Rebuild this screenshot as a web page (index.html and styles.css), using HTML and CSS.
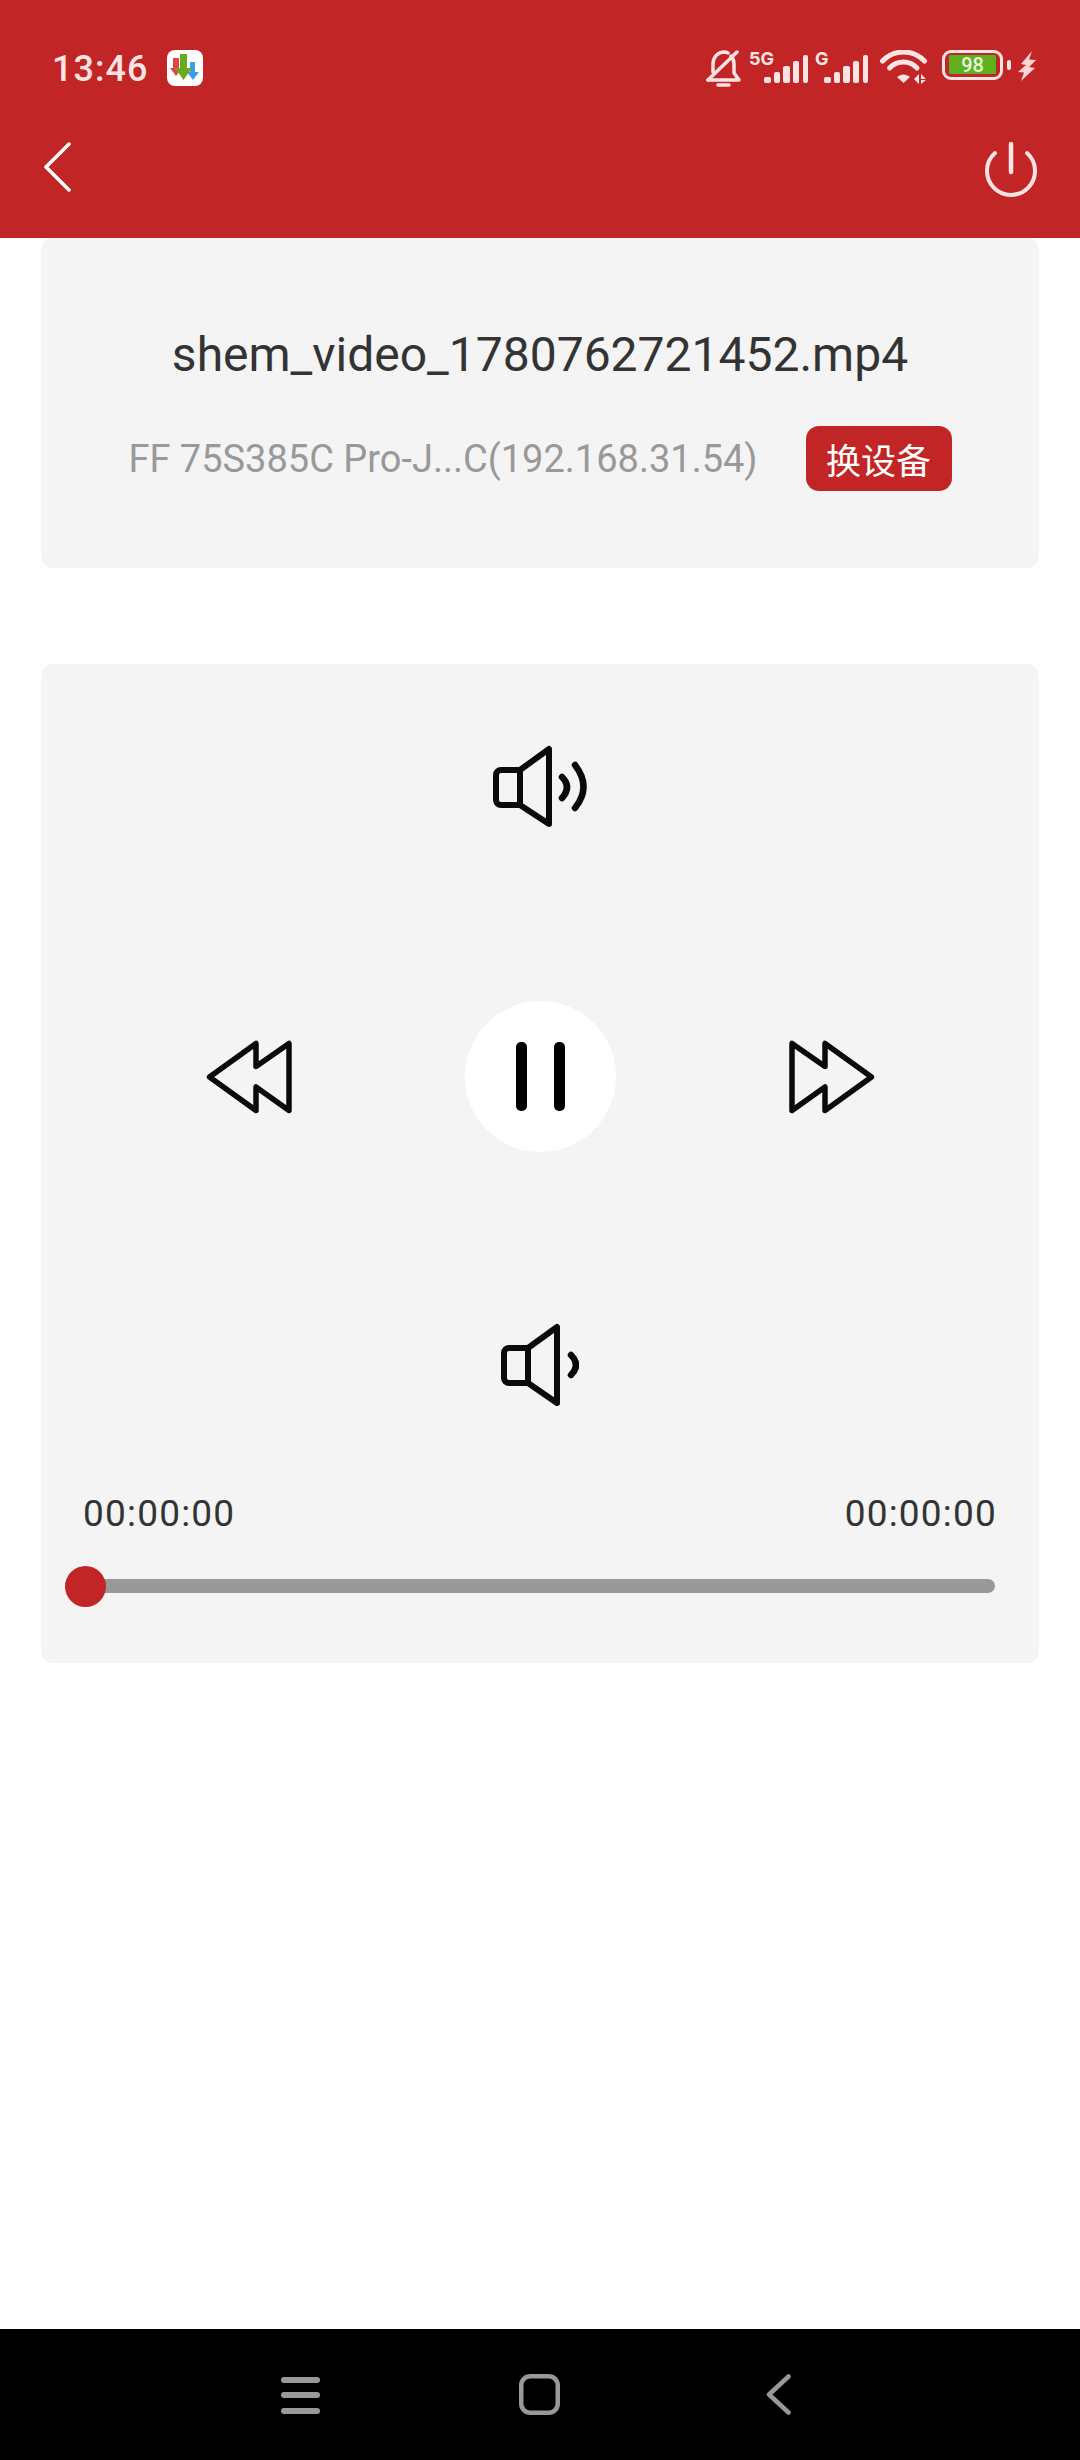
FILE: index.html
```html
<!DOCTYPE html>
<html lang="en">
<head>
  <meta charset="UTF-8" />
  <meta name="viewport" content="width=device-width, initial-scale=1.0" />
  <title>Cast Remote</title>
  <link rel="stylesheet" href="styles.css">
</head>
<body>
  <header class="top">
    <div class="status">
      <div class="status-left">
        <span class="clock">13:46</span>
        <svg class="app-icon" width="36" height="36" viewBox="0 0 36 36">
          <rect width="36" height="36" rx="8" fill="#fff" />
          <path d="M6 8h6v10h3l-6 8-6-8h3z" fill="#e04646" />
          <path d="M23 12h5v10h4l-6 8-6-8h3z" fill="#3d9fea" />
          <path d="M13 4h7v14h5l-8.500 12L8 18h5z" fill="#6aab1e" />
        </svg>
      </div>
      <div class="status-right">
        <svg width="35" height="37" viewBox="0 0 35 37" fill="none" stroke="#fde4e4" stroke-width="3.500" stroke-linecap="round" stroke-linejoin="round">
          <path d="M2 30h31l-5-7v-9c0-4-1-6-3-8M7 22v-8C7 7 12 2 18 2c2 0 3 .5 4 1" />
          <path d="M2 30L31 2" />
          <path d="M12 35h11" />
        </svg>
        <svg class="net" width="59" height="36" viewBox="0 -5 59 36" fill="#fde4e4">
          <text class="net-label" x="0" y="13">5G</text>
          <rect x="15" y="25" width="7" height="6" rx="2" />
          <rect x="25" y="20" width="6" height="11" rx="2" />
          <rect x="34" y="14" width="7" height="17" rx="2" />
          <rect x="44" y="9" width="6" height="22" rx="2" />
          <rect x="54" y="3" width="5" height="28" rx="2" />
        </svg>
        <svg class="net" width="53" height="36" viewBox="0 -5 53 36" fill="#fde4e4">
          <text class="net-label" x="0" y="13">G</text>
          <rect x="9" y="25" width="7" height="6" rx="2" />
          <rect x="19" y="20" width="6" height="11" rx="2" />
          <rect x="28" y="14" width="7" height="17" rx="2" />
          <rect x="38" y="9" width="6" height="22" rx="2" />
          <rect x="48" y="3" width="5" height="28" rx="2" />
        </svg>
        <svg width="48" height="34" viewBox="0 0 48 34" fill="none" stroke="#fde4e4" stroke-width="5" stroke-linecap="round">
          <path d="M2.500 11C14 -1 33 -1 44.500 11" />
          <path d="M9.500 18C17 10 30 10 37 18" />
          <path d="M17 27C21 23.500 26 23.500 30 27L23.500 33z" fill="#fde4e4" stroke="none" />
          <path d="M34 29l5-5v10zM41 24l5 5h-5zM41 34v-4h5z" fill="#fde4e4" stroke="none" />
        </svg>
        <div class="battery">
          <div class="battery-body"><span class="battery-level">98</span></div>
          <span class="battery-nub"></span>
        </div>
        <svg class="bolt" width="18" height="30" viewBox="0 0 18 30" fill="#fbd5d5">
          <path d="M14 0L3 13l5 1-8 7 6 .500L3 30l14-13-6-1 7-7-7-.500z" />
        </svg>
      </div>
    </div>
    <div class="toolbar">
      <svg width="28" height="50" viewBox="0 0 28 50" fill="none" stroke="#fff" stroke-width="3.500" stroke-linecap="round" stroke-linejoin="round">
        <path d="M25 2L2 25l23 23" />
      </svg>
      <svg width="52" height="56" viewBox="0 0 52 56" fill="none" stroke="#fde4e4" stroke-width="4" stroke-linecap="round">
        <path d="M10 11A24 24 0 1 0 42 11" />
        <path d="M26 2v28" stroke-width="4.500" />
      </svg>
    </div>
  </header>

  <main class="content">
    <section class="card info">
      <div class="file-name">shem_video_1780762721452.mp4</div>
      <div class="device-row">
        <span class="device-name">FF 75S385C Pro-J...C(192.168.31.54)</span>
        <button class="switch-btn" type="button">换设备</button>
      </div>
    </section>

    <section class="card remote">
      <svg class="vol-up" width="94" height="83" viewBox="0 0 94 83" fill="none" stroke="#0a0a0a" stroke-width="6" stroke-linecap="round" stroke-linejoin="round">
        <path d="M27 25H8a5 5 0 0 0-5 5v25a5 5 0 0 0 5 5h19z" />
        <path d="M27 25L56 4v75L27 60" />
        <path d="M69 32q10 10 0 21" stroke-width="6.500" />
        <path d="M82 20q17 22 0 43" stroke-width="6.500" />
      </svg>

      <div class="transport">
        <svg width="86" height="76" viewBox="0 0 86 76" fill="none" stroke="#0a0a0a" stroke-width="5.500" stroke-linejoin="round">
          <path d="M3.500 38L50 4.500v23L83 4.500v67L50 48v23.500z" />
        </svg>
        <button class="pause-btn" type="button">
          <span class="pause-bar"></span>
          <span class="pause-bar"></span>
        </button>
        <svg width="86" height="76" viewBox="0 0 86 76" fill="none" stroke="#0a0a0a" stroke-width="5.500" stroke-linejoin="round">
          <path d="M82.500 38L36 4.500v23L3 4.500v67L36 48v23.500z" />
        </svg>
      </div>

      <svg class="vol-down" width="78" height="84" viewBox="0 0 78 84" fill="none" stroke="#0a0a0a" stroke-width="6" stroke-linecap="round" stroke-linejoin="round">
        <path d="M27 25H8a5 5 0 0 0-5 5v25a5 5 0 0 0 5 5h19z" />
        <path d="M27 25L56 4v76L27 60" />
        <path d="M70 32q10 10 0 20" stroke-width="6.500" />
      </svg>

      <div class="times">
        <span>00:00:00</span>
        <span>00:00:00</span>
      </div>
      <div class="slider">
        <span class="slider-thumb"></span>
      </div>
    </section>
  </main>

  <nav class="navbar">
    <svg width="39" height="37" viewBox="0 0 39 37" fill="#999">
      <rect y="0" width="39" height="6" rx="3" />
      <rect y="15" width="39" height="6" rx="3" />
      <rect y="31" width="39" height="6" rx="3" />
    </svg>
    <svg width="41" height="41" viewBox="0 0 41 41" fill="none" stroke="#999" stroke-width="4.500">
      <rect x="2.250" y="2.250" width="36.500" height="36.500" rx="9" />
    </svg>
    <svg width="25" height="41" viewBox="0 0 25 41" fill="none" stroke="#999" stroke-width="4.500" stroke-linecap="round" stroke-linejoin="round">
      <path d="M22.500 2.500L3 20.500l19.500 18" />
    </svg>
  </nav>
</body>
</html>
```

FILE: styles.css
```css
* {
  box-sizing: border-box;
}
body {
  margin: 0;
  height: 2460px;
  display: flex;
  flex-direction: column;
  background-color: #fff;
  font-family: Roboto, "Noto Sans CJK SC", sans-serif;
}
svg {
  display: block;
  flex-shrink: 0;
}

/* top bar */
.top {
  height: 238px;
  background-color: #c22525;
}
.status {
  height: 92px;
  padding: 50px 44px 0 52px;
  display: flex;
  justify-content: space-between;
}
.status-left {
  display: flex;
  align-items: flex-start;
  gap: 19px;
}
.clock {
  font-size: 36px;
  line-height: 38px;
  font-weight: 500;
  letter-spacing: 1px;
  color: #fde4e4;
}
.status-right {
  display: flex;
  align-items: flex-start;
  gap: 8px;
}
.status-right .net {
  margin-top: -3px;
}
.status-right svg:nth-child(3) {
  margin-left: -1px;
}
.status-right svg:nth-child(4) {
  margin-left: 4px;
}
.net-label {
  font-family: Inter, sans-serif;
  font-size: 18px;
  font-weight: 700;
}
.battery {
  margin-left: 6px;
  display: flex;
  align-items: center;
  gap: 4px;
}
.battery-body {
  width: 61px;
  height: 30px;
  padding: 2px 4px 3px;
  border: 3px solid #fde4e4;
  border-radius: 9px;
}
.battery-level {
  display: block;
  height: 19px;
  background-color: #5fb01e;
  border-radius: 1px;
  text-align: center;
  font-size: 20px;
  line-height: 20px;
  font-weight: 500;
  color: #e9f6dc;
}
.battery-nub {
  width: 4px;
  height: 10px;
  background-color: #fde4e4;
  border-radius: 2px;
}
.bolt {
  margin-left: -1px;
  margin-top: 1px;
}
.toolbar {
  padding: 50px 43px 0 44px;
  display: flex;
  justify-content: space-between;
  align-items: flex-start;
}

/* cards */
.content {
  flex: 1;
  padding: 0 41px;
}
.card {
  background-color: #f4f4f4;
  border-radius: 12px;
}
.info {
  height: 330px;
  padding-top: 87px;
}
.file-name {
  text-align: center;
  font-size: 48px;
  line-height: 60px;
  color: #333;
}
.device-row {
  margin-top: 41px;
  display: flex;
  justify-content: center;
  align-items: center;
  gap: 48px;
}
.device-name {
  font-size: 38px;
  color: #999;
}
.switch-btn {
  width: 146px;
  height: 65px;
  padding: 0;
  border: none;
  border-radius: 13px;
  background-color: #c22525;
  color: #fff;
  font-family: inherit;
  font-size: 35px;
}

/* player remote */
.remote {
  margin-top: 96px;
  height: 999px;
  padding: 81px 42px 0;
  display: flex;
  flex-direction: column;
  align-items: center;
}
.transport {
  margin-top: 173px;
  display: flex;
  align-items: center;
  gap: 173px;
}
.pause-btn {
  width: 151px;
  height: 151px;
  padding: 0;
  border: none;
  border-radius: 50%;
  background-color: #fff;
  display: flex;
  justify-content: center;
  align-items: center;
  gap: 27px;
}
.pause-bar {
  width: 11px;
  height: 69px;
  border-radius: 5px;
  background-color: #000;
}
.vol-down {
  margin-top: 171px;
}
.times {
  align-self: stretch;
  margin-top: 86px;
  display: flex;
  justify-content: space-between;
  font-size: 37px;
  line-height: 42px;
  letter-spacing: 1.200px;
  color: #333;
}
.slider {
  position: relative;
  align-self: stretch;
  margin: 44px 2px 0 -18px;
  height: 14px;
  border-radius: 7px;
  background-color: #999;
}
.slider-thumb {
  position: absolute;
  left: 0;
  top: -13px;
  width: 41px;
  height: 41px;
  border-radius: 50%;
  background-color: #c22525;
}

/* system nav */
.navbar {
  height: 131px;
  padding: 45px 8px 0 0;
  background-color: #000;
  display: flex;
  align-items: flex-start;
  justify-content: center;
}
.navbar svg:nth-child(1) {
  margin: 3px 199px 0 0;
}
.navbar svg:nth-child(3) {
  margin-left: 206px;
}
```
